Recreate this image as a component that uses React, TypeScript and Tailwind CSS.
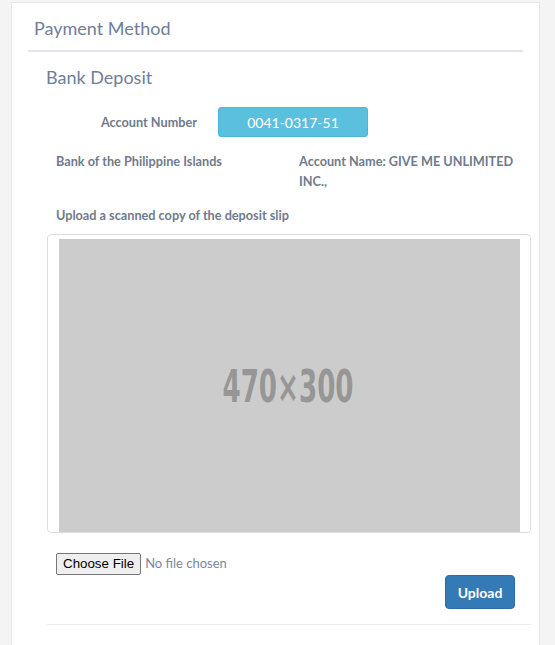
import React from "react";

export default function App() {
  const lato = { fontFamily: "Lato, 'Open Sans', sans-serif" } as React.CSSProperties;
  return (
    <div className="min-h-screen bg-[#f4f4f4] pl-[11px] pr-[15px] pt-[2px]" style={lato}>
      <div className="border border-[#e4e6ec] bg-white pb-[60px]">
        <div className="ml-[16px] mr-[16px] border-b-2 border-[#e2e6ec] pl-[6px] pt-[15px] pb-[12px]">
          <h1 className="text-[18px] leading-[20px] text-[#6f7e9b]">Payment Method</h1>
        </div>
        <div className="pl-[35px] pr-[8px]">
          <h2 className="-ml-[1px] mt-[15px] text-[18px] leading-[20px] text-[#6f7e9b]">Bank Deposit</h2>

          <div className="mt-[20px] flex items-center">
            <div className="w-[150px] text-right text-[12.7px] font-bold leading-[20px] text-[#6f7b8c]">
              Account Number
            </div>
            <div className="ml-[21px] flex h-[30px] w-[150px] items-center justify-center rounded-[3px] border border-[#46b8da] bg-[#5bc0de] text-[14px] text-white">
              0041-0317-51
            </div>
          </div>

          <div className="mt-[14px] flex text-[12.7px] font-bold leading-[20px] text-[#6f7b8c]">
            <div className="w-1/2 pl-[9px] pr-[10px]">Bank of the Philippine Islands</div>
            <div className="w-1/2 pl-[10px] pr-[10px]">Account Name: GIVE ME UNLIMITED INC.,</div>
          </div>

          <div className="mt-[14px] pl-[9px] text-[12.7px] font-bold leading-[20px] text-[#6f7b8c]">
            Upload a scanned copy of the deposit slip
          </div>

          <div className="mt-[9px] flex justify-center rounded-[4px] border border-[#dddddd] pt-[4px]">
            <svg width="461" height="293" viewBox="0 0 461 293" className="block">
              <rect width="461" height="293" fill="#cccccc" />
              <text
                x="229"
                y="163"
                textAnchor="middle"
                fontFamily="'DejaVu Sans Condensed', 'DejaVu Sans', sans-serif"
                fontSize="45"
                fontWeight="bold"
                fill="#969696"
                textLength="131"
                lengthAdjust="spacingAndGlyphs"
              >
                470×300
              </text>
            </svg>
          </div>

          <div className="mt-[20px] flex items-center pl-[9px]">
            <span
              className="flex h-[22px] items-center rounded-[2px] border border-[#767676] bg-[#efefef] px-[6px] text-[13.33px] text-black"
              style={{ fontFamily: "'Liberation Sans', Arial, sans-serif" }}
            >
              Choose File
            </span>
            <span className="ml-[4px] text-[13px] text-[#7b879b]">No file chosen</span>
          </div>

          <div className="flex justify-end pr-[16px]">
            <button className="h-[34px] w-[70px] rounded-[4px] border border-[#2e6da4] bg-[#337ab7] text-[14px] font-bold text-white">
              Upload
            </button>
          </div>

          <div className="mt-[15px] border-t border-[#eeeeee]" />
        </div>
      </div>
    </div>
  );
}
